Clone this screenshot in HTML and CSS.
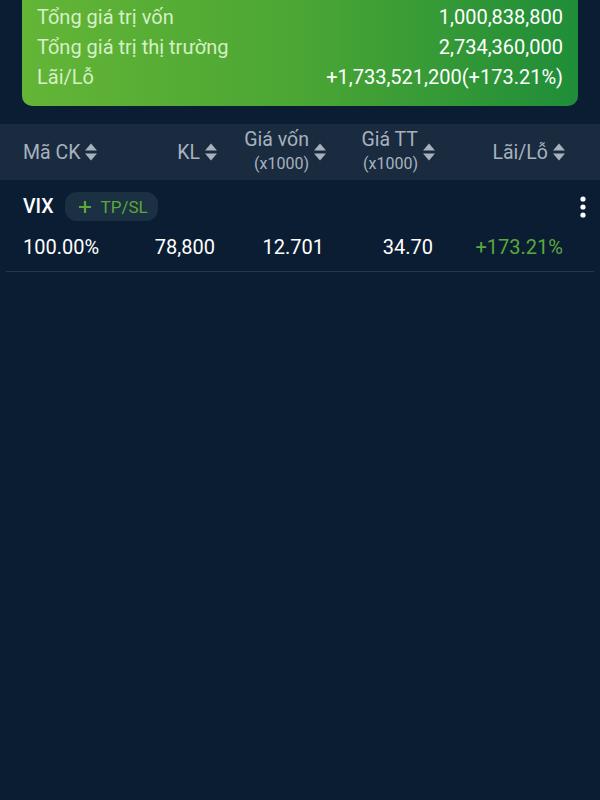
FILE: index.html
```html
<!DOCTYPE html>
<html lang="vi">
<head>
    <meta charset="UTF-8">
    <meta name="viewport" content="width=device-width, initial-scale=1.0">
    <title>Danh mục</title>
    <link rel="stylesheet" href="styles.css">
</head>
<body>
    <div class="summary">
        <div class="summary-row"><span class="label">Tổng giá trị vốn</span><span class="value">1,000,838,800</span></div>
        <div class="summary-row"><span class="label">Tổng giá trị thị trường</span><span class="value">2,734,360,000</span></div>
        <div class="summary-row"><span class="label">Lãi/Lỗ</span><span class="value">+1,733,521,200(+173.21%)</span></div>
    </div>

    <div class="table-head">
        <div class="th th-left">
            <span>Mã CK</span>
            <svg class="sort" viewBox="0 0 14 20"><path d="M1 8.5 L7 1.5 L13 8.5 Z"/><path d="M1 11.5 L7 18.5 L13 11.5 Z"/></svg>
        </div>
        <div class="th">
            <span>KL</span>
            <svg class="sort" viewBox="0 0 14 20"><path d="M1 8.5 L7 1.5 L13 8.5 Z"/><path d="M1 11.5 L7 18.5 L13 11.5 Z"/></svg>
        </div>
        <div class="th">
            <div class="th-stack"><span>Giá vốn</span><small>(x1000)</small></div>
            <svg class="sort" viewBox="0 0 14 20"><path d="M1 8.5 L7 1.5 L13 8.5 Z"/><path d="M1 11.5 L7 18.5 L13 11.5 Z"/></svg>
        </div>
        <div class="th">
            <div class="th-stack"><span>Giá TT</span><small>(x1000)</small></div>
            <svg class="sort" viewBox="0 0 14 20"><path d="M1 8.5 L7 1.5 L13 8.5 Z"/><path d="M1 11.5 L7 18.5 L13 11.5 Z"/></svg>
        </div>
        <div class="th">
            <span>Lãi/Lỗ</span>
            <svg class="sort" viewBox="0 0 14 20"><path d="M1 8.5 L7 1.5 L13 8.5 Z"/><path d="M1 11.5 L7 18.5 L13 11.5 Z"/></svg>
        </div>
    </div>

    <div class="stock">
        <div class="stock-top">
            <span class="symbol">VIX</span>
            <button class="tpsl">
                <svg viewBox="0 0 14 14"><path d="M7 1 V13 M1 7 H13"/></svg>
                TP/SL
            </button>
            <svg class="kebab" viewBox="0 0 6 22"><circle cx="3" cy="3" r="2.6"/><circle cx="3" cy="11" r="2.6"/><circle cx="3" cy="19" r="2.6"/></svg>
        </div>
        <div class="stock-data">
            <span class="cell-left">100.00%</span>
            <span>78,800</span>
            <span>12.701</span>
            <span>34.70</span>
            <span class="up">+173.21%</span>
        </div>
    </div>
</body>
</html>
```

FILE: styles.css
```css
:root {
    --bg: #0b1d33;
    --head-bg: #1a2b40;
    --fg: #ffffff;
    --muted: #a7b2bf;
    --green: #5aa83c;
    --line: #26374b;
}
body {
    margin: 0;
    background-color: var(--bg);
    color: var(--fg);
    font-family: Roboto, "Noto Sans", sans-serif;
    height: 800px;
    overflow: hidden;
}
.summary {
    margin: 0 22px;
    padding: 2px 15px 14px;
    background: linear-gradient(90deg, #63b536 0%, #4ba634 50%, #1f8d39 100%);
    border-radius: 0 0 10px 10px;
    font-size: 20px;
}
.summary-row {
    display: flex;
    justify-content: space-between;
    line-height: 30px;
}
.summary-row .label {
    color: #d6f0c6;
}
.summary-row .value {
    color: #ffffff;
}
.table-head {
    margin-top: 18px;
    height: 56px;
    background: var(--head-bg);
    display: grid;
    grid-template-columns: 1fr 100px 109px 109px 130px;
    padding: 0 34px 0 23px;
    color: var(--muted);
    font-size: 19.5px;
}
.th {
    display: flex;
    align-items: center;
    justify-content: flex-end;
    gap: 4px;
}
.th-left {
    justify-content: flex-start;
}
.th-stack {
    display: flex;
    flex-direction: column;
    align-items: flex-end;
    line-height: 24px;
    margin-top: -1px;
}
.th-stack small {
    font-size: 16px;
    line-height: 24px;
}
.sort {
    width: 14px;
    height: 20px;
    fill: var(--muted);
}
.stock {
    margin: 0 6px;
    padding: 12px 8px 9px 17px;
    border-bottom: 1px solid var(--line);
}
.stock-top {
    display: flex;
    align-items: center;
    height: 29px;
}
.symbol {
    font-size: 19.5px;
    font-weight: 500;
}
.tpsl {
    margin-left: 11px;
    height: 29px;
    padding: 0 10px 0 13px;
    display: flex;
    align-items: center;
    gap: 9px;
    background: #1c3043;
    border: none;
    border-radius: 12px;
    color: var(--green);
    font-family: inherit;
    font-size: 17px;
}
.tpsl svg {
    width: 14px;
    height: 14px;
    stroke: var(--green);
    stroke-width: 2.2;
    fill: none;
}
.kebab {
    margin-left: auto;
    width: 6px;
    height: 22px;
    fill: #ffffff;
}
.stock-data {
    margin-top: 11px;
    margin-right: 20px;
    display: grid;
    grid-template-columns: 1fr 100px 109px 109px 130px;
    line-height: 30px;
    font-size: 20px;
}
.stock-data span {
    text-align: right;
    padding-right: 3px;
}
.stock-data .cell-left {
    text-align: left;
}
.stock-data .up {
    color: var(--green);
}
```
